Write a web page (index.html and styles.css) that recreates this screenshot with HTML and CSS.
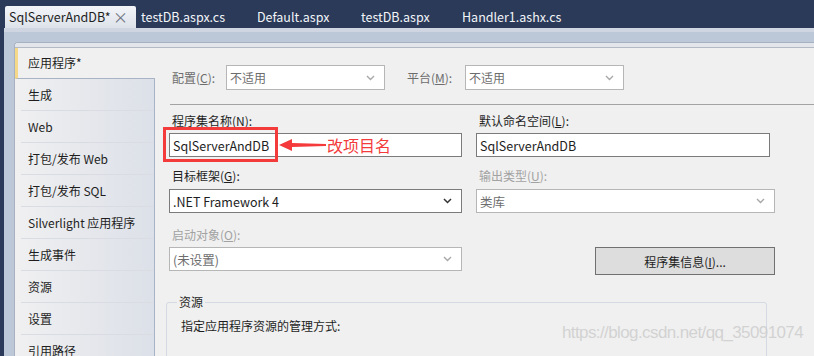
FILE: index.html
```html
<!DOCTYPE html>
<html lang="zh">
<head>
<meta charset="utf-8">
<title>SqlServerAndDB</title>
<link rel="stylesheet" href="styles.css">
</head>
<body>
<div class="tabbar">
  <div class="tab active"><span>SqlServerAndDB*</span><span class="close">×</span></div>
  <div class="tab t2">testDB.aspx.cs</div>
  <div class="tab t3">Default.aspx</div>
  <div class="tab t4">testDB.aspx</div>
  <div class="tab t5">Handler1.ashx.cs</div>
</div>
<div class="frame">
  <div class="panel">
    <div class="panel-top"></div>
    <div class="panel-body">
      <nav class="nav">
        <div class="nav-item selected">应用程序*</div>
        <div class="nav-item">生成</div>
        <div class="nav-item">Web</div>
        <div class="nav-item">打包/发布 Web</div>
        <div class="nav-item">打包/发布 SQL</div>
        <div class="nav-item">Silverlight 应用程序</div>
        <div class="nav-item">生成事件</div>
        <div class="nav-item">资源</div>
        <div class="nav-item">设置</div>
        <div class="nav-item">引用路径</div>
      </nav>
      <main class="pane">
        <div class="cfgrow">
          <span class="cfg-label dim">配置(<u>C</u>):</span>
          <div class="select disabled w159"><span>不适用</span><svg class="chev" width="9" height="6" viewBox="0 0 9 6"><polyline points="1,1 4.5,4.5 8,1" fill="none" stroke="#a8a8a8" stroke-width="1.4"/></svg></div>
          <span class="cfg-label dim plat">平台(<u>M</u>):</span>
          <div class="select disabled w159"><span>不适用</span><svg class="chev" width="9" height="6" viewBox="0 0 9 6"><polyline points="1,1 4.5,4.5 8,1" fill="none" stroke="#a8a8a8" stroke-width="1.4"/></svg></div>
        </div>
        <div class="sep"></div>
        <div class="grid">
          <div class="field r1 annot">
            <label>程序集名称(<u>N</u>):</label>
            <div class="input"><span>SqlServerAndDB</span></div>
            <div class="redbox"></div>
            <svg class="arrow" width="48" height="14" viewBox="0 0 48 14"><polygon points="0,7 13,1 13,5 47,6 47,8 13,9 13,13" fill="#f43a3a"/></svg>
            <span class="note">改项目名</span>
          </div>
          <div class="field r1">
            <label>默认命名空间(<u>L</u>):</label>
            <div class="input w294"><span>SqlServerAndDB</span></div>
          </div>
          <div class="field r2">
            <label>目标框架(<u>G</u>):</label>
            <div class="select enabled"><span>.NET Framework 4</span><svg class="chev" width="9" height="6" viewBox="0 0 9 6"><polyline points="1,1 4.5,4.5 8,1" fill="none" stroke="#333" stroke-width="1.5"/></svg></div>
          </div>
          <div class="field r2">
            <label class="dim2">输出类型(<u>U</u>):</label>
            <div class="select disabled"><span>类库</span><svg class="chev" width="9" height="6" viewBox="0 0 9 6"><polyline points="1,1 4.5,4.5 8,1" fill="none" stroke="#a8a8a8" stroke-width="1.4"/></svg></div>
          </div>
          <div class="field r3">
            <label class="dim2">启动对象(<u>O</u>):</label>
            <div class="select disabled"><span>(未设置)</span><svg class="chev" width="9" height="6" viewBox="0 0 9 6"><polyline points="1,1 4.5,4.5 8,1" fill="none" stroke="#a8a8a8" stroke-width="1.4"/></svg></div>
          </div>
          <div class="field r3 btncell">
            <button class="btn">程序集信息(<u>I</u>)...</button>
          </div>
        </div>
        <fieldset class="group">
          <legend>资源</legend>
          <p>指定应用程序资源的管理方式:</p>
        </fieldset>
      </main>
    </div>
  </div>
</div>
<div class="watermark">https://blog.csdn.net/qq_35091074</div>
</body>
</html>
```
FILE: styles.css
```css
html, body {
  margin: 0;
  padding: 0;
}
body {
  width: 814px;
  height: 356px;
  overflow: hidden;
  background: #2a3a58;
  font-family: "Noto Sans CJK SC", "Noto Sans", sans-serif;
  font-size: 12px;
  color: #1e1e1e;
  position: relative;
}
u { text-decoration: underline; text-underline-offset: 1px; }

.tabbar {
  height: 28px;
  display: flex;
  align-items: flex-end;
  padding-left: 5px;
  box-sizing: border-box;
  font-size: 12.5px;
}
.tab {
  height: 22px;
  line-height: 22px;
  color: #f2f4f8;
  padding-left: 5px;
  box-sizing: border-box;
  white-space: nowrap;
}
.tab.active {
  width: 131px;
  padding-left: 4px;
  color: #1e1e1e;
  background: linear-gradient(#f3f5f8, #dde2ea);
  border-radius: 2px 2px 0 0;
  display: flex;
  justify-content: space-between;
  padding-right: 8px;
}
.close { color: #6f7580; font-size: 15px; }
.t2 { width: 116px; }
.t3 { width: 104px; }
.t4 { width: 101px; }
.t5 { width: 150px; }

.frame {
  margin-left: 4px;
  background: #bcc8d8;
  border-top: 4px solid #cfd6e1;
  padding: 10px 0 0 10px;
  height: 328px;
  box-sizing: border-box;
}
.panel {
  background: #f0f0f0;
  border-top: 1px solid #a7b1c1;
  border-left: 1px solid #a7b1c1;
  border-radius: 4px 0 0 0;
  height: 100%;
  box-sizing: border-box;
  overflow: hidden;
}
.panel-top {
  height: 4px;
  background: #e2e5ea;
  border-bottom: 1px solid #b4bac5;
}
.panel-body {
  display: flex;
}
.nav {
  width: 140px;
  flex: none;
}
.nav-item {
  height: 32px;
  line-height: 32px;
  padding-left: 13px;
  box-sizing: border-box;
  background: linear-gradient(90deg, #f0f0f1, #dce0e8);
  border-right: 1px solid #a8b3c5;
  position: relative;
  white-space: nowrap;
}
.nav-item::after {
  content: "";
  position: absolute;
  left: 6px;
  right: 0;
  bottom: 0;
  border-bottom: 1px solid #d9dde3;
}
.nav-item.selected {
  height: 31px;
  line-height: 29px;
  background: #f0f0f0;
  border-right: none;
  border-left: 3px solid #f5d889;
  padding-left: 10px;
  border-bottom: 1px solid #a8b3c5;
}
.nav-item.selected::after { display: none; }

.pane {
  flex: 1;
  padding-top: 17px;
}
.cfgrow {
  display: flex;
  align-items: center;
  padding-left: 17px;
  height: 25px;
}
.cfg-label { width: 54px; flex: none; }
.cfg-label.plat { width: 58px; margin-left: 22px; }
.dim { color: #6d6d6d; }
.dim2 { color: #a2a2a2; }

.select, .input {
  height: 24px;
  box-sizing: border-box;
  background: #fff;
  display: flex;
  align-items: center;
  justify-content: space-between;
  padding: 0 9px 0 3px;
  white-space: nowrap;
  font-size: 12.5px;
}
.select.w159 { width: 159px; height: 25px; font-size: 12px; }
.select.disabled { border: 1px solid #b6b6b6; color: #6d6d6d; }
.select.enabled { border: 1px solid #7b7b7b; }
.input { border: 1px solid #7b7b7b; }
.chev { flex: none; }

.sep {
  margin: 14px 0 0 15px;
  border-top: 1px solid #a3a3a3;
}

.grid {
  display: grid;
  grid-template-columns: 293px 299px;
  column-gap: 14px;
  margin-left: 14px;
}
.field { position: relative; }
.field label {
  display: block;
  height: 16px;
  line-height: 16px;
  padding-left: 3px;
  margin-bottom: 4px;
  white-space: nowrap;
}
.field.r1 { margin-top: 8px; }
.field.r2 { margin-top: 11px; }
.field.r2 label { margin-bottom: 5px; }
.field.r3 { margin-top: 14px; }
.input.w294 { width: 294px; }
.btncell {
  display: flex;
  justify-content: flex-end;
  align-items: flex-end;
}
.btn {
  width: 180px;
  height: 28px;
  background: #dddddd;
  border: 1px solid #707070;
  font: inherit;
  color: #1e1e1e;
  margin-bottom: -4px;
  padding: 0;
}

.redbox {
  position: absolute;
  left: -6px;
  top: 14px;
  width: 115px;
  height: 35px;
  border: 3px solid #f33b3b;
  box-sizing: border-box;
}
.arrow {
  position: absolute;
  left: 110px;
  top: 25px;
}
.note {
  position: absolute;
  left: 158px;
  top: 21px;
  color: #f33b3b;
  font-size: 16px;
  line-height: 22px;
  white-space: nowrap;
}

.group {
  margin: 23px 0 0 11px;
  width: 601px;
  box-sizing: border-box;
  border: 1px solid #d3dae2;
  border-radius: 3px;
  padding: 8px 14px 40px 14px;
}
.group legend {
  padding: 0 2px;
  margin-left: -4px;
  line-height: 16px;
}
.group p {
  margin: 0;
  line-height: 16px;
}

.watermark {
  position: absolute;
  left: 562px;
  top: 323px;
  font-family: "Liberation Sans", Arial, sans-serif;
  font-size: 17px;
  color: rgba(205, 205, 205, 0.85);
  letter-spacing: -0.6px;
  white-space: nowrap;
}
```
